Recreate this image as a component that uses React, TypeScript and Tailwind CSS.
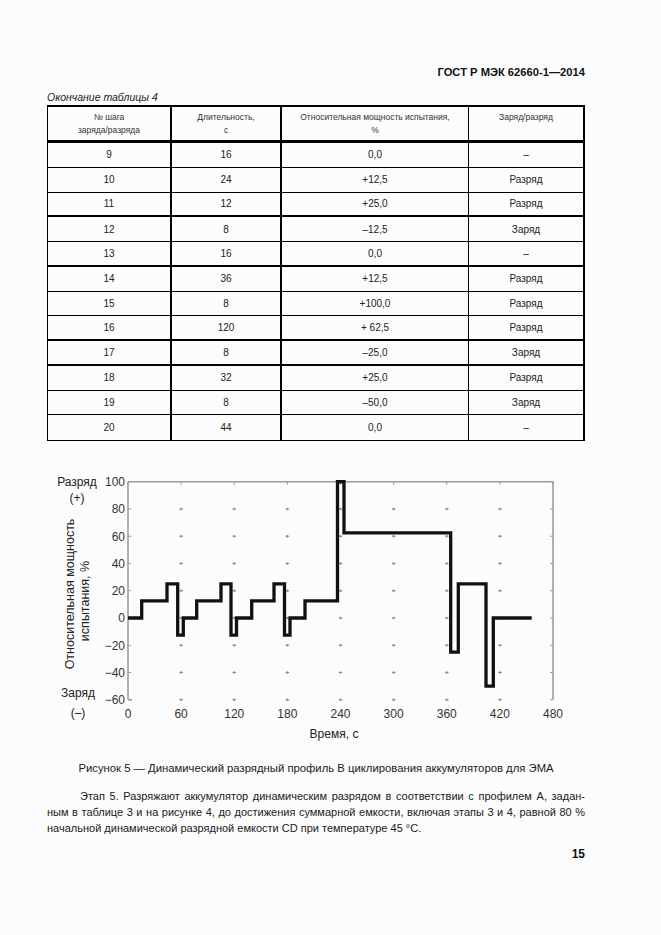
import React from "react";

const X0 = 128;
const XS = 425 / 480;
const Y0 = 617;
const YS = 1.3625;
const xt = (t: number) => X0 + t * XS;
const yv = (v: number) => Y0 - v * YS;

const segs: [number, number][] = [
  [141.7, 0],
  [167, 12.5],
  [177.7, 25],
  [183.3, -12.5],
  [196.7, 0],
  [221, 12.5],
  [231, 25],
  [236.5, -12.5],
  [251.7, 0],
  [274, 12.5],
  [284.5, 25],
  [290, -12.5],
  [305, 0],
  [337.5, 12.5],
  [344, 100],
  [450.7, 62.5],
  [458.3, -25],
  [486, 25],
  [493.3, -50],
  [531.7, 0],
];

function profilePoints() {
  const pts: string[] = [`${X0},${yv(0)}`];
  for (let i = 0; i < segs.length; i++) {
    const [xe, v] = segs[i];
    if (i > 0) pts.push(`${segs[i - 1][0]},${yv(v)}`);
    pts.push(`${xe},${yv(v)}`);
  }
  return pts.join(" ");
}

const rows: { n: string; d: string; p: string; c: string; thick?: boolean }[] = [
  { n: "9", d: "16", p: "0,0", c: "–" },
  { n: "10", d: "24", p: "+12,5", c: "Разряд" },
  { n: "11", d: "12", p: "+25,0", c: "Разряд", thick: true },
  { n: "12", d: "8", p: "–12,5", c: "Заряд" },
  { n: "13", d: "16", p: "0,0", c: "–", thick: true },
  { n: "14", d: "36", p: "+12,5", c: "Разряд" },
  { n: "15", d: "8", p: "+100,0", c: "Разряд" },
  { n: "16", d: "120", p: "+ 62,5", c: "Разряд", thick: true },
  { n: "17", d: "8", p: "–25,0", c: "Заряд", thick: true },
  { n: "18", d: "32", p: "+25,0", c: "Разряд" },
  { n: "19", d: "8", p: "–50,0", c: "Заряд" },
  { n: "20", d: "44", p: "0,0", c: "–" },
];

function Chart() {
  const font = "'Liberation Sans', Arial, sans-serif";
  const yTicks = [100, 80, 60, 40, 20, 0, -20, -40, -60];
  const xTicks = [0, 60, 120, 180, 240, 300, 360, 420, 480];
  const marks: React.ReactNode[] = [];
  for (let k = 1; k <= 7; k++) {
    for (let j = -3; j <= 4; j++) {
      const cx = xt(60 * k);
      const cy = yv(20 * j);
      marks.push(
        <g key={`m${k}_${j}`} stroke="#8f8f8f" strokeWidth={1.2}>
          <line x1={cx - 1.8} y1={cy} x2={cx + 1.8} y2={cy} />
          <line x1={cx} y1={cy - 1.2} x2={cx} y2={cy + 1.2} />
        </g>
      );
    }
  }
  return (
    <svg
      width={661}
      height={280}
      viewBox="0 465 661 280"
      className="block"
      style={{ fontFamily: font }}
    >
      <g stroke="#9a9a9a" strokeWidth={1.5} fill="none">
        <line x1={X0} y1={yv(100)} x2={xt(480)} y2={yv(100)} />
        <line x1={X0} y1={yv(100)} x2={X0} y2={yv(-60)} />
        <line x1={xt(480)} y1={yv(100)} x2={xt(480)} y2={yv(-60)} />
        <line x1={X0} y1={yv(-60)} x2={X0 + 4} y2={yv(-60)} />
      </g>
      <g stroke="#9a9a9a" strokeWidth={1}>
        {yTicks.map((v) => (
          <line key={`lt${v}`} x1={X0} y1={yv(v)} x2={X0 + 3} y2={yv(v)} />
        ))}
        {yTicks.map((v) => (
          <line key={`rt${v}`} x1={xt(480) - 3} y1={yv(v)} x2={xt(480)} y2={yv(v)} />
        ))}
        {xTicks.map((t) => (
          <line key={`tt${t}`} x1={xt(t)} y1={yv(100)} x2={xt(t)} y2={yv(100) + 3} />
        ))}
      </g>
      {marks}
      <polyline
        points={profilePoints()}
        fill="none"
        stroke="#111"
        strokeWidth={3.3}
        strokeLinejoin="miter"
      />
      {yTicks.map((v) => (
        <text
          key={`yl${v}`}
          x={125}
          y={yv(v) + 4.3}
          fontSize={12}
          textAnchor="end"
          fill="#333"
        >
          {v < 0 ? `−${-v}` : v}
        </text>
      ))}
      {xTicks.map((t) => (
        <text
          key={`xl${t}`}
          x={xt(t)}
          y={716.5}
          fontSize={12}
          textAnchor="middle"
          fill="#333"
        >
          {t}
        </text>
      ))}
      <text x={77} y={485} fontSize={12} textAnchor="middle" fill="#222">
        Разряд
      </text>
      <text x={77} y={501} fontSize={12} textAnchor="middle" fill="#222">
        (+)
      </text>
      <text x={78} y={696} fontSize={12} textAnchor="middle" fill="#222">
        Заряд
      </text>
      <text x={78} y={716} fontSize={12} textAnchor="middle" fill="#222">
        (–)
      </text>
      <text
        x={70}
        y={593}
        fontSize={12.5}
        textAnchor="middle"
        dominantBaseline="central"
        fill="#222"
        transform="rotate(-90 70 593)"
      >
        Относительная мощность
      </text>
      <text
        x={85}
        y={600}
        fontSize={12.5}
        textAnchor="middle"
        dominantBaseline="central"
        fill="#222"
        transform="rotate(-90 85 600)"
      >
        испытания, %
      </text>
      <text x={334} y={737} fontSize={12} textAnchor="middle" fill="#222">
        Время, с
      </text>
    </svg>
  );
}

export default function App() {
  return (
    <div className="min-h-[935px] w-[661px] bg-[#fcfcfc] text-[#1a1a1a] font-['Liberation_Sans',Arial,sans-serif]">
      <div className="ml-[47px] w-[538px]">
        <div className="pt-[65px] text-right text-[11.2px] leading-[14px] font-bold text-[#111]">
          ГОСТ Р МЭК 62660-1—2014
        </div>
        <div className="mt-[11px] text-[10.5px] leading-[14px] italic text-[#222]">
          Окончание таблицы 4
        </div>
        <div className="mt-[1px] border-t-2 border-l border-r-2 border-b border-black">
          <div className="grid grid-cols-[124px_110px_187px_114px] h-[36px] border-b-[3px] border-black text-[8.5px] leading-[13px] text-[#333] text-center">
            <div className="border-r-2 border-black pt-[4px]">
              <div>№ шага</div>
              <div>заряда/разряда</div>
            </div>
            <div className="border-r-2 border-black pt-[4px]">
              <div>Длительность,</div>
              <div>с</div>
            </div>
            <div className="border-r border-black pt-[4px]">
              <div>Относительная мощность испытания,</div>
              <div>%</div>
            </div>
            <div className="pt-[4px]">
              <div>Заряд/разряд</div>
            </div>
          </div>
          {rows.map((r, i) => (
            <div
              key={r.n}
              className={`grid grid-cols-[124px_110px_187px_114px] h-[24.75px] text-[10px] text-[#222] text-center ${
                i === rows.length - 1
                  ? ""
                  : r.thick
                  ? "border-b-2 border-black"
                  : "border-b border-black"
              }`}
            >
              <div className="border-r-2 border-black flex items-center justify-center">
                {r.n}
              </div>
              <div className="border-r-2 border-black flex items-center justify-center">
                {r.d}
              </div>
              <div className="border-r border-black flex items-center justify-center">
                {r.p}
              </div>
              <div className="flex items-center justify-center">{r.c}</div>
            </div>
          ))}
        </div>
      </div>
      <div className="mt-[25px]">
        <Chart />
      </div>
      <div className="ml-[47px] w-[538px]">
        <div className="mt-[15px] text-center text-[11.3px] leading-[14px] text-[#1a1a1a]">
          Рисунок 5 — Динамический разрядный профиль В циклирования аккумуляторов для ЭМА
        </div>
        <div className="mt-[13px] text-[11px] leading-[16px] text-[#1a1a1a]">
          <div className="pl-[33px] text-justify [text-align-last:justify]">
            Этап 5. Разряжают аккумулятор динамическим разрядом в соответствии с профилем А, задан-
          </div>
          <div className="text-justify [text-align-last:justify]">
            ным в таблице 3 и на рисунке 4, до достижения суммарной емкости, включая этапы 3 и 4, равной 80 %
          </div>
          <div>начальной динамической разрядной емкости CD при температуре 45 °C.</div>
        </div>
        <div className="mt-[11px] text-right text-[12px] leading-[14px] font-bold text-[#111]">
          15
        </div>
      </div>
    </div>
  );
}
